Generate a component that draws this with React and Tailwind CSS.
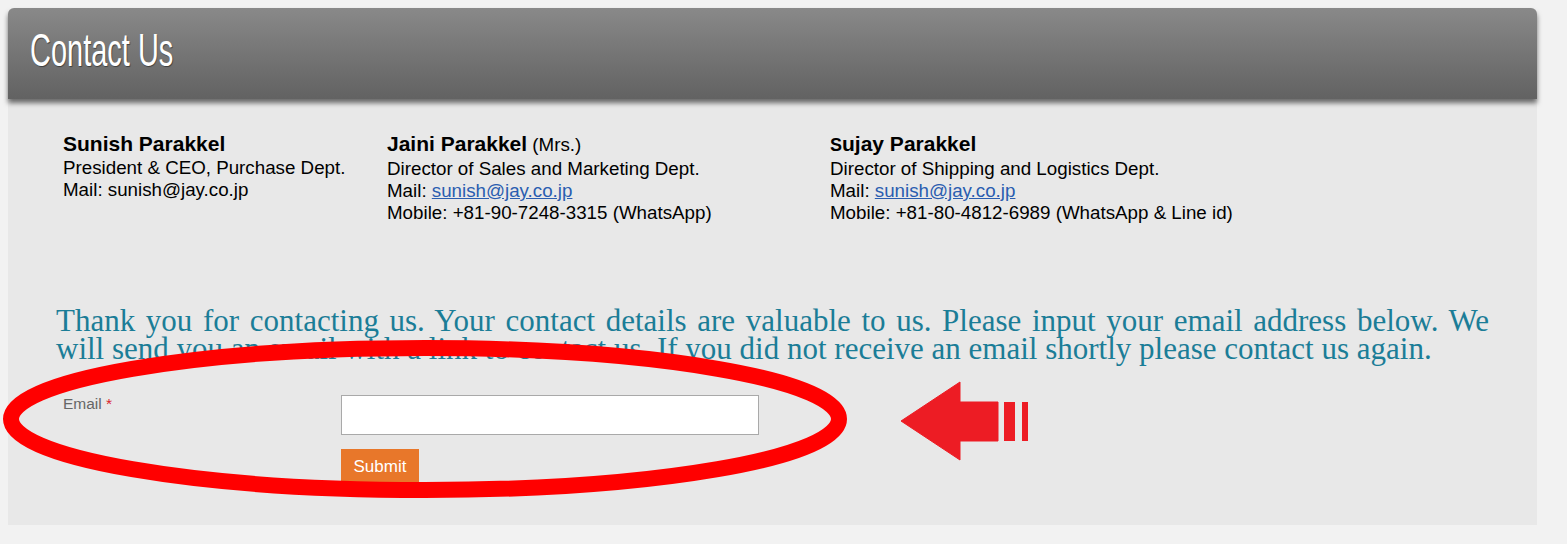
import React from 'react';

const people = [
  {
    name: 'Sunish Parakkel',
    lines: ['President & CEO, Purchase Dept.', 'Mail: sunish@jay.co.jp'],
  },
  {
    name: 'Jaini Parakkel',
    suffix: ' (Mrs.)',
    title: 'Director of Sales and Marketing Dept.',
    mail: 'sunish@jay.co.jp',
    mobile: 'Mobile: +81-90-7248-3315 (WhatsApp)',
  },
  {
    name: 'ujay Parakkel',
    smallS: true,
    title: 'Director of Shipping and Logistics Dept.',
    mail: 'sunish@jay.co.jp',
    mobile: 'Mobile: +81-80-4812-6989 (WhatsApp & Line id)',
  },
];

const Person = ({ p }) => (
  <div className="text-[18.75px] leading-[22px] text-black">
    <div className="text-[21px] leading-[26px] font-bold">
      {p.smallS && <span className="text-[18px]">S</span>}
      {p.name}
      {p.suffix && <span className="font-normal text-[18.75px]">{p.suffix}</span>}
    </div>
    {p.lines && p.lines.map((l) => <div key={l}>{l}</div>)}
    {p.title && <div>{p.title}</div>}
    {p.mail && (
      <div>
        Mail: <a href="#" className="text-[#2a5db0] underline">{p.mail}</a>
      </div>
    )}
    {p.mobile && <div>{p.mobile}</div>}
  </div>
);

export default function App() {
  return (
    <div className="relative min-h-[544px] bg-[#f2f2f2] p-2 font-['Liberation_Sans',Arial,sans-serif]">
      <div className="w-[1529px] h-[517px] bg-[#e8e8e8] rounded-t-[6px]">
        <header className="relative z-10 h-[91px] rounded-t-[6px] bg-linear-to-b from-[#898989] to-[#626262] shadow-[0_4px_5px_rgba(0,0,0,0.55)] pl-[22px] pt-[19px]">
          <h1 className="text-white text-[46px] leading-none origin-left scale-x-[0.63] [text-shadow:1px_1px_1px_rgba(0,0,0,0.45)]">
            Contact Us
          </h1>
        </header>

        <div className="grid grid-cols-[324px_443px_1fr] pl-[55px] mt-[32px]">
          {people.map((p) => (
            <Person key={p.name} p={p} />
          ))}
        </div>

        <div className="mt-[83px] px-[48px] font-['Liberation_Serif','Times_New_Roman',serif] text-[31px] leading-[28px] text-[#1b7d97]">
          <div className="whitespace-nowrap text-justify [text-align-last:justify]">
            Thank you for contacting us. Your contact details are valuable to us. Please input your email address below. We
          </div>
          <div className="whitespace-nowrap">
            will send you an email with a link to contact us. If you did not receive an email shortly please contact us again.
          </div>
        </div>

        <form className="mt-[32px] grid grid-cols-[278px_1fr] pl-[55px]">
          <label className="text-[15.5px] leading-[18px] text-[#666]">
            Email <span className="text-[#d9262c]">*</span>
          </label>
          <div className="flex flex-col items-start">
            <input type="email" className="w-[418px] h-[40px] border border-[#a9a9a9] bg-white" />
            <button type="button" className="mt-[14px] h-[36px] w-[78px] bg-[#e8772a] text-white text-[17px]">
              Submit
            </button>
          </div>
        </form>
      </div>

      <svg className="absolute inset-0 pointer-events-none" width="1567" height="544" viewBox="0 0 1567 544">
        <ellipse cx="425" cy="419" rx="414" ry="71" fill="none" stroke="#ff0000" strokeWidth="16" />
        <path d="M901 421 L960 382 L960 402 L998 402 L998 441 L960 441 L960 460 Z" fill="#ed1c24" strokeLinejoin="round" stroke="#ed1c24" strokeWidth="1" />
        <rect x="1004" y="402" width="11" height="39" fill="#ed1c24" />
        <rect x="1022" y="402" width="6" height="39" fill="#ed1c24" />
      </svg>
    </div>
  );
}
